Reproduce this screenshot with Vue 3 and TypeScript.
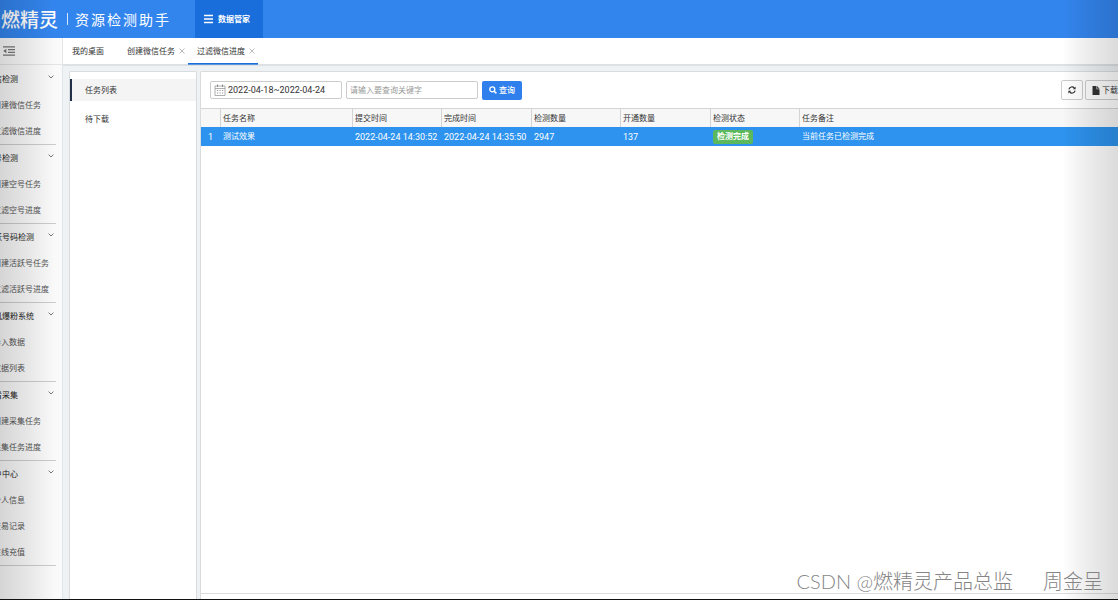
<script setup lang="ts">
import { ref } from 'vue'

interface MenuGroup {
  title: string
  items: string[]
}

const menu: MenuGroup[] = [
  { title: '微信检测', items: ['创建微信任务', '过滤微信进度'] },
  { title: '空号检测', items: ['创建空号任务', '过滤空号进度'] },
  { title: '活跃号码检测', items: ['创建活跃号任务', '过滤活跃号进度'] },
  { title: '手机爆粉系统', items: ['导入数据', '数据列表'] },
  { title: '查看采集', items: ['创建采集任务', '采集任务进度'] },
  { title: '用户中心', items: ['个人信息', '交易记录', '在线充值'] },
]

const tabs = [
  { name: '我的桌面', closable: false },
  { name: '创建微信任务', closable: true },
  { name: '过滤微信进度', closable: true },
]
const activeTab = ref(2)

const lists = ['任务列表', '待下载']
const activeList = ref(0)

const dateRange = ref('2022-04-18~2022-04-24')
const keyword = ref('')

const tasks = [
  {
    name: '测试效果',
    submitted: '2022-04-24 14:30:52',
    finished: '2022-04-24 14:35:50',
    checked: 2947,
    opened: 137,
    status: '检测完成',
    remark: '当前任务已检测完成',
  },
]
</script>

<template>
  <div class="app">
    <header class="top">
      <h1 class="brand">
        <span class="brand-name">燃精灵</span>
        <span class="brand-bar"></span>
        <span class="brand-sub">资源检测助手</span>
      </h1>
      <a class="top-link" href="#">
        <svg viewBox="0 0 10 10" width="10" height="10"><path d="M1 1.500h9M1 5h9M1 8.500h9" stroke="currentColor" stroke-width="1.3" /></svg>
        数据管家
      </a>
    </header>

    <div class="body">
      <aside class="side">
        <button class="collapse" aria-label="收起菜单">
          <svg viewBox="0 0 12 10" width="12" height="10"><path d="M0 .8h12M5 3.600h7M5 6.400h7M0 9.200h12" stroke="#777" stroke-width="1.3" /><path d="M3.400 2.800v4.400L.2 5z" fill="#777" /></svg>
        </button>
        <nav class="menu">
          <section v-for="g in menu" :key="g.title" class="group">
            <button class="group-title">
              <span>{{ g.title }}</span>
              <svg viewBox="0 0 6 4" width="6" height="4"><path d="M.6.6 3 3 5.400.6" fill="none" stroke="#666" stroke-width=".9" /></svg>
            </button>
            <a v-for="i in g.items" :key="i" class="item" href="#">{{ i }}</a>
          </section>
        </nav>
      </aside>

      <div class="work">
        <nav class="tabs">
          <div v-for="(t, n) in tabs" :key="t.name" class="tab" :class="{ active: n === activeTab }">
            <button class="tab-name" @click="activeTab = n">{{ t.name }}</button>
            <button v-if="t.closable" class="tab-close" aria-label="关闭">
              <svg viewBox="0 0 6 6" width="6" height="6"><path d="M.5.5l5 5M5.500.5l-5 5" stroke="#aaa" stroke-width=".8" /></svg>
            </button>
          </div>
        </nav>

        <div class="panels">
          <nav class="lists">
            <a v-for="(l, n) in lists" :key="l" href="#" class="list" :class="{ active: n === activeList }" @click.prevent="activeList = n">{{ l }}</a>
          </nav>

          <main class="content">
            <form class="toolbar" @submit.prevent>
              <label class="field">
                <svg viewBox="0 0 12 12" width="12" height="12">
                  <path d="M1 2h10v9.500H1zM1 4.500h10" fill="none" stroke="#999" stroke-width=".8" />
                  <path d="M3.500.5v2.500M8.500.5v2.500" stroke="#888" />
                  <path d="M3 6.500h6.500M3 9h6.500" stroke="#999" stroke-width="1.200" stroke-dasharray="1.200 1.300" />
                </svg>
                <input v-model="dateRange" type="text" aria-label="日期范围" />
              </label>
              <label class="field">
                <input v-model="keyword" type="text" placeholder="请输入要查询关键字" aria-label="关键字" />
              </label>
              <button class="search">
                <svg viewBox="0 0 8 8" width="8" height="8"><circle cx="3.300" cy="3.300" r="2.500" fill="none" stroke="currentColor" stroke-width="1.300" /><path d="M5.200 5.200 7.400 7.400" stroke="currentColor" stroke-width="1.500" /></svg>
                查询
              </button>
              <div class="actions">
                <button type="button" class="plain" aria-label="刷新">
                  <svg viewBox="0 0 8 8" width="8" height="8">
                    <path d="M.9 3.300A3.100 3.100 0 0 1 6.300 2M7.100 4.700A3.100 3.100 0 0 1 1.700 6" fill="none" stroke="#333" stroke-width="1.200" />
                    <path d="M7.600.6v2.700H4.900zM.4 7.400V4.700h2.700z" fill="#333" />
                  </svg>
                </button>
                <button type="button" class="plain">
                  <svg viewBox="0 0 8 9" width="8" height="9"><path d="M.5 0h4v3.300h3V9h-7zM5.100 0l2.400 2.700H5.100z" fill="#333" /></svg>
                  下载文件
                </button>
              </div>
            </form>

            <div class="table-wrap">
              <table>
                <colgroup>
                  <col class="c-no" />
                  <col class="c-name" />
                  <col v-for="n in 5" :key="n" class="c-mid" />
                  <col />
                </colgroup>
                <thead>
                  <tr>
                    <th></th>
                    <th>任务名称</th>
                    <th>提交时间</th>
                    <th>完成时间</th>
                    <th>检测数量</th>
                    <th>开通数量</th>
                    <th>检测状态</th>
                    <th>任务备注</th>
                  </tr>
                </thead>
                <tbody>
                  <tr v-for="(t, n) in tasks" :key="t.name">
                    <td class="no">{{ n + 1 }}</td>
                    <td>{{ t.name }}</td>
                    <td>{{ t.submitted }}</td>
                    <td>{{ t.finished }}</td>
                    <td>{{ t.checked }}</td>
                    <td>{{ t.opened }}</td>
                    <td><span class="badge">{{ t.status }}</span></td>
                    <td>{{ t.remark }}</td>
                  </tr>
                </tbody>
              </table>
            </div>
          </main>
        </div>
      </div>
    </div>

    <div class="shade left"></div>
    <div class="shade right"></div>
    <p class="credit"><span>CSDN @燃精灵产品总监</span><span>周金呈</span></p>
  </div>
</template>

<style>
body {
  margin: 0;
}
</style>

<style scoped>
* {
  box-sizing: border-box;
}
.app {
  position: relative;
  display: flex;
  flex-direction: column;
  height: 100vh;
  overflow: hidden;
  border-bottom: 1px solid #111;
  background: #eef2f4;
  color: #333;
  font: 8px/12px "Open Sans", "Noto Sans CJK SC", sans-serif;
}
button,
input {
  margin: 0;
  padding: 0;
  border: 0;
  background: none;
  color: inherit;
  font: inherit;
}
a {
  color: inherit;
  text-decoration: none;
}
svg {
  flex: none;
}
.top {
  display: flex;
  flex: none;
  height: 38px;
  background: #3385ee;
  color: #fff;
}
.brand {
  display: flex;
  align-items: center;
  width: 195px;
  margin: 0;
  padding-left: 1px;
  font-family: "Noto Sans CJK SC", sans-serif;
  font-weight: 400;
  white-space: nowrap;
}
.brand-name {
  font-size: 19px;
  font-weight: 500;
  line-height: 36px;
}
.brand-bar {
  width: 1px;
  height: 12px;
  margin: 0 7px 0 9px;
  background: #d5e5fb;
}
.brand-sub {
  font-size: 14px;
  line-height: 36px;
  letter-spacing: 2px;
}
.top-link {
  display: flex;
  align-items: center;
  gap: 5px;
  padding: 0 13px 0 8px;
  background: #196edc;
  font-weight: 600;
}
.body {
  display: flex;
  flex: 1;
  min-height: 0;
}
.side {
  flex: none;
  width: 63px;
  overflow: hidden;
  border-right: 1px solid #e2e6e8;
  background: #fafafa;
}
.collapse {
  display: flex;
  align-items: center;
  width: 100%;
  height: 27px;
  padding-left: 3px;
  border-bottom: 1px solid #e4e4e4;
}
.menu {
  margin: 0 6px 0 -14px;
  padding-top: 1px;
}
.group {
  border-bottom: 1px solid #ccc;
}
.group-title {
  display: flex;
  align-items: center;
  justify-content: space-between;
  width: 100%;
  height: 26px;
  padding-right: 2px;
  color: #222;
  white-space: nowrap;
}
.group-title svg {
  margin-bottom: 4px;
}
.item {
  display: block;
  padding-left: 7px;
  color: #555;
  line-height: 26px;
  white-space: nowrap;
}
.work {
  display: flex;
  flex: 1;
  flex-direction: column;
  min-width: 0;
}
.tabs {
  display: flex;
  flex: none;
  height: 28px;
  border-bottom: 2px solid #dde1e3;
  background: #fff;
}
.tab {
  display: flex;
  align-items: center;
  gap: 4px;
  height: 26px;
  padding: 0 3px 0 9px;
}
.tab:first-child {
  padding-right: 14px;
}
.tab.active {
  border-bottom: 1px solid #196edc;
  box-shadow: 0 1px #5c96e0;
}
.tab-close {
  display: flex;
}
.panels {
  display: flex;
  flex: 1;
  gap: 3px;
  min-height: 0;
  padding: 5px 0 0 6px;
}
.lists {
  flex: none;
  width: 128px;
  padding-top: 7px;
  border: 1px solid #d8dcde;
  border-bottom: 0;
  border-radius: 2px 2px 0 0;
  background: #fff;
}
.list {
  display: block;
  margin-bottom: 7px;
  padding-left: 13px;
  border-left: 2px solid transparent;
  line-height: 22px;
}
.list.active {
  border-left-color: #23304a;
  background: #f4f4f4;
}
.content {
  display: flex;
  flex: 1;
  flex-direction: column;
  min-width: 0;
  overflow: hidden;
  padding-bottom: 5px;
  border: 1px solid #d8dcde;
  border-width: 1px 0 0 1px;
  border-radius: 2px 0 0;
  background: #fff;
}
.toolbar {
  display: flex;
  flex: none;
  align-items: center;
  gap: 4px;
  height: 36px;
  padding-left: 9px;
}
.field {
  display: flex;
  align-items: center;
  gap: 2px;
  width: 132px;
  height: 18px;
  padding: 0 3px;
  border: 1px solid #ccc;
  border-radius: 2px;
}
.field input {
  flex: 1;
  min-width: 0;
  outline: 0;
  font-family: Roboto, "Noto Sans CJK SC", sans-serif;
  font-size: 9px;
}
.field input::placeholder {
  color: #999;
  font-size: 8px;
  opacity: 1;
}
.search {
  display: flex;
  align-items: center;
  gap: 2px;
  height: 19px;
  padding: 0 7px;
  border-radius: 2px;
  background: #2f80ed;
  color: #fff;
  font-weight: 500;
}
.actions {
  display: flex;
  gap: 2px;
  margin: 0 -23px 0 auto;
}
.plain {
  display: flex;
  align-items: center;
  gap: 2px;
  height: 20px;
  padding: 0 6px;
  border: 1px solid #ccc;
  border-radius: 2px;
}
.table-wrap {
  flex: 1;
  border-bottom: 1px solid #ddd;
}
table {
  width: 100%;
  border-collapse: separate;
  border-spacing: 0;
  table-layout: fixed;
}
.c-no {
  width: 19px;
}
.c-name {
  width: 132px;
}
.c-mid {
  width: 89px;
}
.c-mid:nth-child(even) {
  width: 90px;
}
th,
td {
  height: 19px;
  padding: 0 0 0 2px;
  font-weight: 400;
  text-align: left;
  white-space: nowrap;
}
th {
  border: 1px solid #d4d4d4;
  border-width: 1px 0 0 1px;
  background: #f7f7f7;
}
th:first-child {
  border-left: 0;
}
td {
  padding-left: 3px;
  background: #2d93ee;
  color: #fff;
  font-family: Roboto, "Noto Sans CJK SC", sans-serif;
  font-size: 9px;
}
td:nth-child(2),
td:last-child {
  font-size: 8px;
}
td.no {
  padding: 0;
  text-align: center;
}
.badge {
  display: inline-block;
  padding: 0 4px;
  border-radius: 2px;
  background: #5cb85c;
  font-size: 8px;
  font-weight: 700;
  line-height: 14px;
  vertical-align: middle;
}
.shade {
  position: absolute;
  top: 0;
  bottom: 0;
  width: 56px;
  pointer-events: none;
}
.shade.left {
  left: 0;
  background: linear-gradient(to right, rgba(0, 0, 0, 0.15), rgba(0, 0, 0, 0.08) 50%, transparent);
}
.shade.right {
  right: 0;
  background: linear-gradient(to left, rgba(0, 0, 0, 0.14), rgba(0, 0, 0, 0.08) 50%, transparent);
}
.credit {
  position: absolute;
  right: 15px;
  bottom: 5px;
  display: flex;
  gap: 30px;
  margin: 0;
  color: #858585;
  font-family: Lato, "Noto Sans CJK SC", sans-serif;
  font-size: 20px;
  font-weight: 300;
  line-height: 26px;
}
</style>
